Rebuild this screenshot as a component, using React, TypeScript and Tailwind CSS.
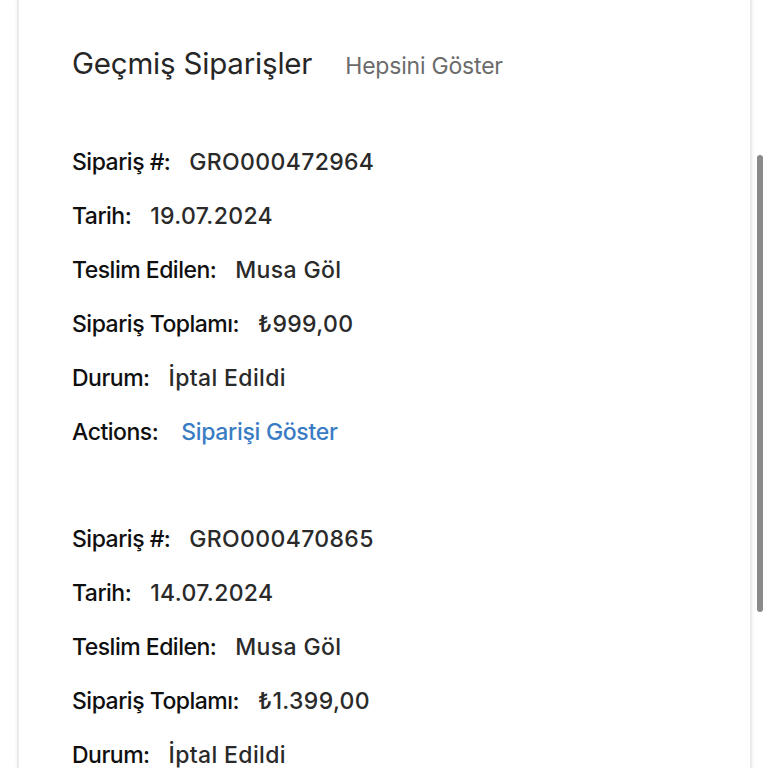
import React from "react";

type Row = { label: string; value: string; link?: boolean };

const orders: Row[][] = [
  [
    { label: "Sipariş #:", value: "GRO000472964" },
    { label: "Tarih:", value: "19.07.2024" },
    { label: "Teslim Edilen:", value: "Musa Göl" },
    { label: "Sipariş Toplamı:", value: "₺999,00" },
    { label: "Durum:", value: "İptal Edildi" },
    { label: "Actions:", value: "Siparişi Göster", link: true },
  ],
  [
    { label: "Sipariş #:", value: "GRO000470865" },
    { label: "Tarih:", value: "14.07.2024" },
    { label: "Teslim Edilen:", value: "Musa Göl" },
    { label: "Sipariş Toplamı:", value: "₺1.399,00" },
    { label: "Durum:", value: "İptal Edildi" },
  ],
];

export default function App() {
  return (
    <div
      className="relative h-[768px] w-[768px] overflow-hidden bg-white"
      style={{ fontFamily: "Inter, 'Noto Sans', sans-serif" }}
    >
      <div className="mx-[17px] mr-[16px] h-full border-x-[2px] border-[#ececec] bg-white pl-[53px] shadow-[0_0_4px_rgba(0,0,0,0.08)]">
        <div className="flex items-baseline pt-[41px]">
          <h2 className="text-[29.5px] font-normal tracking-[-0.2px] text-[#262626]">
            Geçmiş Siparişler
          </h2>
          <span className="ml-[33px] text-[23px] tracking-[-0.2px] text-[#6b6b6b]">Hepsini Göster</span>
        </div>
        <div className="mt-[50px] flex flex-col gap-[53px]">
          {orders.map((rows, i) => (
            <div key={i} className="flex flex-col">
              {rows.map((r) => (
                <div key={r.label} className="flex h-[54px] items-center text-[23px] font-[450]">
                  <span className="tracking-[-0.5px] text-[#0f0f0f]">{r.label}</span>
                  <span
                    className={
                      r.link
                        ? "ml-[23px] tracking-[-0.3px] text-[#3a7cc3]"
                        : "ml-[19px] tracking-[0.35px] text-[#2a2a2a]"
                    }
                  >
                    {r.value}
                  </span>
                </div>
              ))}
            </div>
          ))}
        </div>
      </div>
      <div className="absolute left-[757px] top-[155px] h-[457px] w-[6px] rounded-full bg-[#8a8a8a]" />
    </div>
  );
}
